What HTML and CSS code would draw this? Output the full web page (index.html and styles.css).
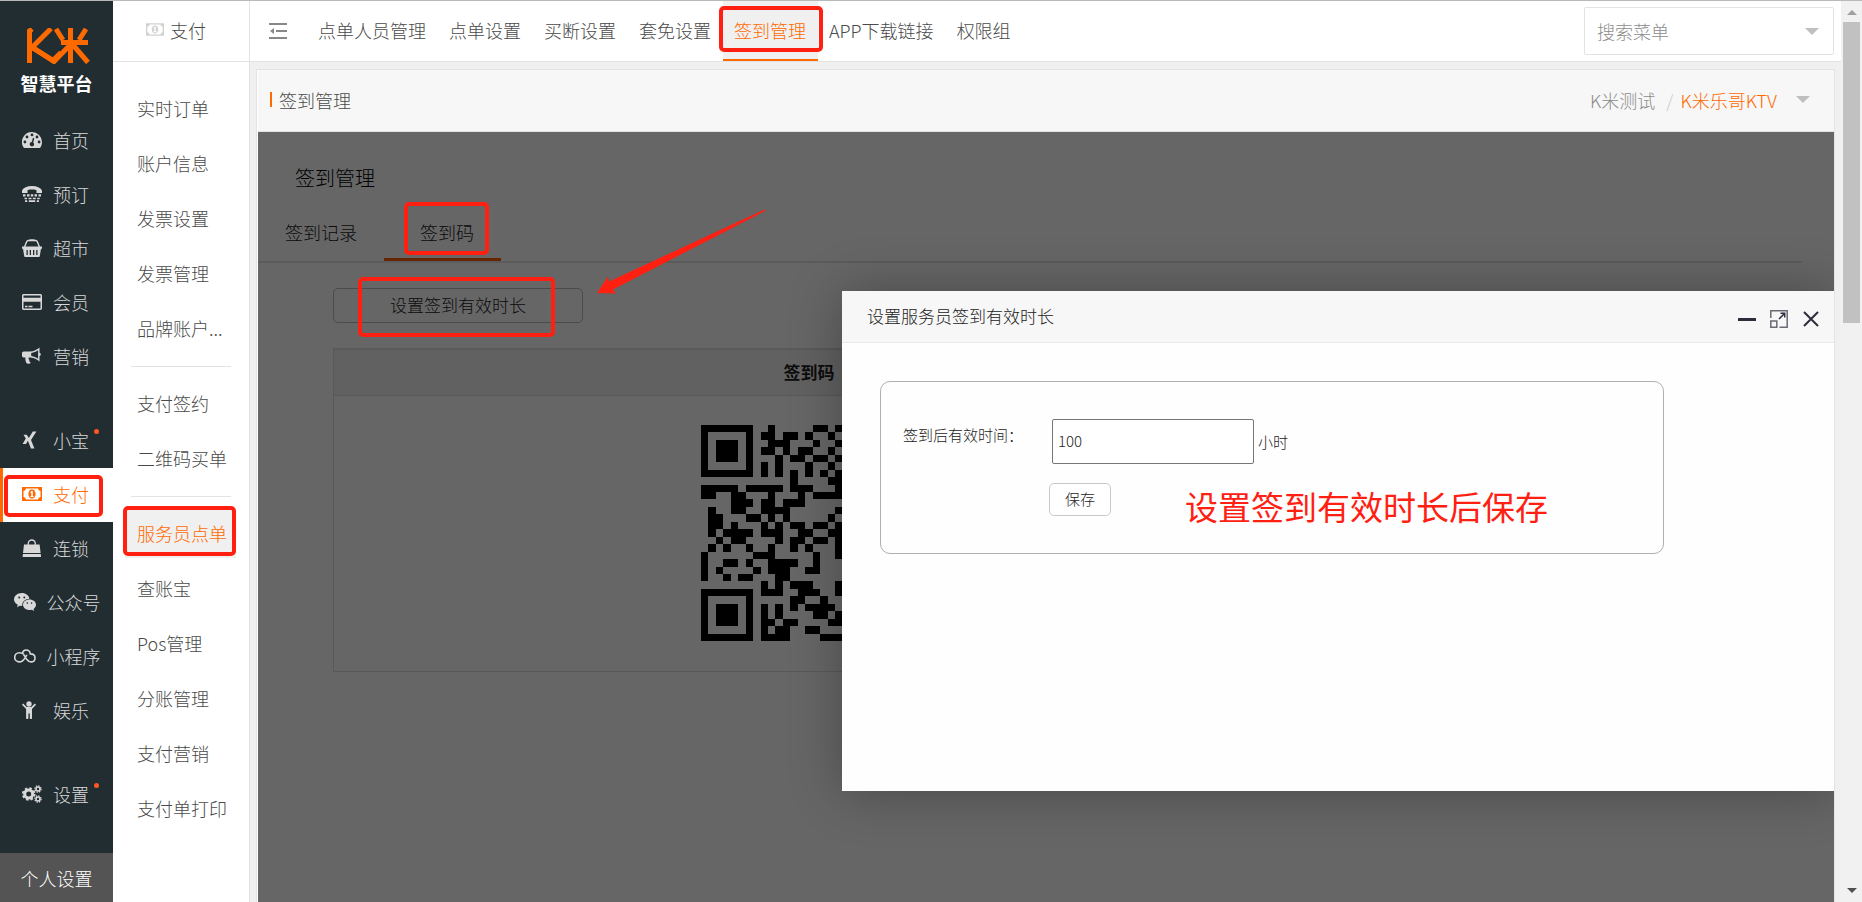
FILE: index.html
```html
<!DOCTYPE html>
<html lang="zh-CN">
<head>
<meta charset="utf-8">
<title>签到管理</title>
<link rel="stylesheet" href="styles.css">
</head>
<body>
<svg class="sprite" aria-hidden="true">
  <symbol id="i-money" viewBox="0 0 20 14"><path fill-rule="evenodd" d="M0 0h20v14H0zM4 1.500A2.800 2.800 0 0 1 1.500 4v6A2.800 2.800 0 0 1 4 12.500h12A2.800 2.800 0 0 1 18.500 10V4A2.800 2.800 0 0 1 16 1.500zM10 2.500c2.200 0 3.600 2 3.600 4.500s-1.400 4.500-3.600 4.500S6.400 9.500 6.400 7 7.800 2.500 10 2.500zM9.600 4 8.200 5.200l.5.8.6-.3V9H8.400v1h3.300V9h-.9V4z"/></symbol>
  <symbol id="i-dash" viewBox="0 0 20 16"><path fill-rule="evenodd" d="M10 0a10 10 0 0 1 10 10c0 2-.6 3.900-1.600 5.500-.2.300-.4.500-.8.500H2.400c-.4 0-.6-.2-.8-.5A10 10 0 0 1 10 0zM2.900 8.600a1.400 1.400 0 1 0 0 2.800 1.400 1.400 0 0 0 0-2.800zM5 3.600a1.400 1.400 0 1 0 0 2.800 1.400 1.400 0 0 0 0-2.800zM10 1.500a1.400 1.400 0 1 0 0 2.800 1.400 1.400 0 0 0 0-2.800zM15 3.600a1.400 1.400 0 1 0 0 2.800 1.400 1.400 0 0 0 0-2.800zM17.100 8.600a1.400 1.400 0 1 0 0 2.800 1.400 1.400 0 0 0 0-2.800zM11 5.800 9.700 10a2.200 2.200 0 1 0 1.500.4l1.100-4.200z"/></symbol>
  <symbol id="i-tty" viewBox="0 0 20 16"><path d="M0 7V4.500C1.500 1.500 5 0 10 0s8.500 1.500 10 4.500V7h-5.500V4.200C13 3.600 11.500 3.500 10 3.500s-3 .1-4.500.7V7zM1 8.300h2.500v2.300H1zM5 8.300h2.500v2.300H5zM8.800 8.300h2.400v2.300H8.800zM12.500 8.300H15v2.300h-2.500zM16.500 8.300H19v2.300h-2.500zM2.500 11.800H5v1.500H2.500zM6.500 11.800h3v1.500h-3zM10.800 11.800h3v1.500h-3zM15.200 11.800h2.500v1.500h-2.500zM3 14.200h2.200V16H3zM6.800 14.200h6.400V16H6.800zM14.800 14.200H17V16h-2.200z"/></symbol>
  <symbol id="i-basket" viewBox="0 0 20 18"><path d="M2.500 8 4.800 2.500 6 1.500h2M12 1.500h2l1.200 1L17.500 8" fill="none" stroke="currentColor" stroke-width="1.400"/><path fill-rule="evenodd" d="M7.500.3h5v2h-5zM0 7.500h20v2.300h-1L17.800 17a1 1 0 0 1-1 1H3.200a1 1 0 0 1-1-1L1 9.800H0zM4.500 11v5h1.300v-5zM7.700 11v5H9v-5zM11 11v5h1.300v-5zM14.200 11v5h1.300v-5z"/></symbol>
  <symbol id="i-card" viewBox="0 0 20 16"><path fill-rule="evenodd" d="M1.700 0h16.600C19.300 0 20 .7 20 1.700v12.600c0 1-.7 1.700-1.700 1.700H1.700C.7 16 0 15.300 0 14.300V1.700C0 .7.700 0 1.700 0zM1.500 1.400v2.300h17V1.400zM1.500 7.800v6.700h17V7.800zM3 11.800h2.500v1.400H3zM6.500 11.800h4v1.400h-4z"/></symbol>
  <symbol id="i-horn" viewBox="0 0 20 17"><path fill-rule="evenodd" d="M17.500 0v5.300a1.700 1.700 0 0 1 0 3.300V14C15 11.800 12.300 10.500 8.500 10l-1.700.1c-.7 1.200.1 2 .6 2.600-.5 1 .2 1.600 1.300 2.500-.6 1.300-3.200 1.400-4.300.4-.6-2-1.500-3.500-.9-5.600H1.700C.7 10 0 9.300 0 8.300V5.800C0 4.800.7 4 1.700 4H8c3.600 0 7-1.800 9.500-4zM9.200 5.400v3.200c2.700.4 4.800 1.300 6.900 2.700V2.800C14 4.200 11.800 5.200 9.200 5.400z"/></symbol>
  <symbol id="i-xing" viewBox="0 0 20 17"><path d="M1.500 3.200h3.200L7.200 7 4 12.500H.6L3.800 7zM10.800 0h3.600L9 8.500l3.400 8.500H9L5.600 8.500z"/></symbol>
  <symbol id="i-bag" viewBox="0 0 20 18"><path d="M6.300 8V4.500a3.500 3.500 0 0 1 7 0V8" fill="none" stroke="currentColor" stroke-width="1.300"/><path d="M2 5.500h15.600l1 8.500H1zM1 15h17.800l.2 3H.6z"/></symbol>
  <symbol id="i-wechat" viewBox="0 0 22 18"><path fill-rule="evenodd" d="M7.800 0c4 0 7.200 2.500 7.600 5.700-4 .1-7.200 2.900-7.200 6.400v.9l-2.500-.3-2.700 1.600.8-2.500C1.500 10.500 0 8.700 0 6.500 0 2.900 3.500 0 7.800 0zM5.200 3.400a1 1 0 1 0 0 2 1 1 0 0 0 0-2zM10.300 3.400a1 1 0 1 0 0 2 1 1 0 0 0 0-2z"/><path fill-rule="evenodd" d="M15.500 6.500c3.600 0 6.500 2.400 6.500 5.300 0 1.700-1 3.200-2.400 4.100l.5 2.100-2.200-1.200c-4.600 1.100-8.900-1.400-8.900-5 0-2.900 2.900-5.300 6.500-5.300zM13.300 9.300a.8.800 0 1 0 0 1.600.8.800 0 0 0 0-1.600zM17.600 9.300a.8.800 0 1 0 0 1.600.8.800 0 0 0 0-1.600z"/></symbol>
  <symbol id="i-mini" viewBox="0 0 22 14"><path d="M9.800 5.200C8.600 4.300 7 3.700 5.300 3.700a4.600 4.600 0 0 0 0 9.200c2.600 0 4.200-1.500 5.600-3.800l2-3.300M8.300 4.200C8.800 2.200 10.300 1 12.200 1c2.300 0 3.800 1.600 4.100 3.900 2.800.1 4.700 1.600 4.700 4 0 2.300-1.700 4-4 4-2 0-3.200-1.200-4.600-3L9.600 5.500" fill="none" stroke="currentColor" stroke-width="1.600"/></symbol>
  <symbol id="i-child" viewBox="0 0 20 18"><circle cx="7" cy="3" r="2.700"/><path d="M1.200 2.600 4.600 6h4.800l3.400-3.400 1.200 1.200-4 4.200v9a1 1 0 0 1-2.200 0v-4.500H6.400V17a1 1 0 0 1-2.300 0V8L0 3.800z"/></symbol>
  <symbol id="i-cogs" viewBox="0 0 20 18"><g fill="none" stroke="currentColor"><circle cx="6.700" cy="9" r="4" stroke-width="3"/><circle cx="6.700" cy="9" r="5.900" stroke-width="1.800" stroke-dasharray="2.500 2.130"/><circle cx="16" cy="4" r="2" stroke-width="1.600"/><circle cx="16" cy="4" r="3.200" stroke-width="1.200" stroke-dasharray="1.400 1.100"/><circle cx="16" cy="14" r="2" stroke-width="1.600"/><circle cx="16" cy="14" r="3.200" stroke-width="1.200" stroke-dasharray="1.400 1.100"/></g></symbol>
</svg>

<div class="app">
  <nav class="rail">
    <div class="brand">
      <svg class="brand-mark" viewBox="0 0 64 36" fill="none" stroke="#ff6a00" stroke-width="5" role="img" aria-label="K米"><path d="M2.500 35V3L5 .8M24 .5 5 19.500 26 32.500 34 24.500M2.500 14v8"/><path d="M5 19 27 33.500 45 15M29 1l7 11M43.500 0v35M59 1l-7 11M34 14.500h27M46 17l15 17.500"/></svg>
      <span class="brand-name">智慧平台</span>
    </div>
    <a class="rail-item" href="#"><svg class="icon"><use href="#i-dash"/></svg>首页</a>
    <a class="rail-item" href="#"><svg class="icon"><use href="#i-tty"/></svg>预订</a>
    <a class="rail-item" href="#"><svg class="icon"><use href="#i-basket"/></svg>超市</a>
    <a class="rail-item" href="#"><svg class="icon"><use href="#i-card"/></svg>会员</a>
    <a class="rail-item" href="#"><svg class="icon"><use href="#i-horn"/></svg>营销</a>
    <a class="rail-item group-start" href="#"><svg class="icon"><use href="#i-xing"/></svg>小宝<i class="dot"></i></a>
    <a class="rail-item active" href="#"><svg class="icon"><use href="#i-money"/></svg>支付<i class="mark mark-rail"></i></a>
    <a class="rail-item" href="#"><svg class="icon"><use href="#i-bag"/></svg>连锁</a>
    <a class="rail-item" href="#"><svg class="icon wide"><use href="#i-wechat"/></svg>公众号</a>
    <a class="rail-item" href="#"><svg class="icon wide"><use href="#i-mini"/></svg>小程序</a>
    <a class="rail-item" href="#"><svg class="icon"><use href="#i-child"/></svg>娱乐</a>
    <a class="rail-item group-start" href="#"><svg class="icon"><use href="#i-cogs"/></svg>设置<i class="dot"></i></a>
    <a class="rail-foot" href="#">个人设置</a>
  </nav>

  <aside class="sub">
    <h2 class="sub-title"><svg class="icon small"><use href="#i-money"/></svg>支付</h2>
    <nav class="sub-nav">
      <a href="#">实时订单</a>
      <a href="#">账户信息</a>
      <a href="#">发票设置</a>
      <a href="#">发票管理</a>
      <a href="#">品牌账户...</a>
      <hr>
      <a href="#">支付签约</a>
      <a href="#">二维码买单</a>
      <hr>
      <a class="active" href="#">服务员点单<i class="mark mark-sub"></i></a>
      <a href="#">查账宝</a>
      <a href="#">Pos管理</a>
      <a href="#">分账管理</a>
      <a href="#">支付营销</a>
      <a href="#">支付单打印</a>
    </nav>
  </aside>

  <main class="main">
    <header class="topbar">
      <button class="fold" type="button" aria-label="收起菜单"><svg viewBox="0 0 18 16"><path d="M0 0h18v2H0zM7 7h11v2H7zM0 14h18v2H0zM1 8l4-3v6z"/></svg></button>
      <nav class="tabs">
        <a href="#">点单人员管理</a>
        <a href="#">点单设置</a>
        <a href="#">买断设置</a>
        <a href="#">套免设置</a>
        <a class="active" href="#">签到管理<i class="mark mark-tab"></i></a>
        <a href="#">APP下载链接</a>
        <a href="#">权限组</a>
      </nav>
      <label class="search"><input type="text" placeholder="搜索菜单" aria-label="搜索菜单"><i class="caret"></i></label>
    </header>

    <section class="panel">
      <div class="panel-head">
        <h1>签到管理</h1>
        <div class="crumbs"><a href="#">K米测试</a><span class="slash">/</span><a class="current" href="#">K米乐哥KTV</a><i class="caret"></i></div>
      </div>
      <div class="stage">
        <h2 class="stage-title">签到管理</h2>
        <nav class="stage-tabs">
          <a href="#">签到记录</a>
          <a class="active" href="#">签到码<i class="mark mark-code"></i></a>
        </nav>
        <div class="stage-body">
          <button class="set-btn" type="button">设置签到有效时长<i class="mark mark-set"></i></button>
          <table class="code-table">
            <thead><tr><th>签到码</th></tr></thead>
            <tbody><tr><td>
              <svg class="qr" viewBox="0 0 29 29" role="img" aria-label="签到二维码"><path d="M0 .5h7M9 .5h1M15 .5h2M18 .5h1M0 1.500h1M6 1.500h1M8 1.500h2M11 1.500h2M14 1.500h1M17 1.500h1M0 2.500h1M2 2.500h3M6 2.500h1M9 2.500h3M15 2.500h1M18 2.500h1M0 3.500h1M2 3.500h3M6 3.500h1M8 3.500h2M11 3.500h1M13 3.500h2M17 3.500h1M0 4.500h1M2 4.500h3M6 4.500h1M10 4.500h1M12 4.500h2M15 4.500h2M18 4.500h1M0 5.500h1M6 5.500h1M8 5.500h1M10 5.500h1M14 5.500h1M17 5.500h1M0 6.500h7M8 6.500h1M10 6.500h1M12 6.500h1M14 6.500h1M16 6.500h1M18 6.500h1M12 7.500h1M17 7.500h2M0 8.500h5M6 8.500h5M12 8.500h3M18 8.500h1M0 9.500h2M4 9.500h2M9 9.500h1M13 9.500h1M15 9.500h4M4 10.500h3M8 10.500h2M11 10.500h3M1 11.500h1M4 11.500h2M8 11.500h4M18 11.500h1M1 12.500h2M6 12.500h2M9 12.500h1M11 12.500h1M17 12.500h1M1 13.500h2M4 13.500h1M8 13.500h1M10 13.500h1M12 13.500h2M15 13.500h2M18 13.500h1M1 14.500h1M3 14.500h4M8 14.500h3M13 14.500h2M17 14.500h2M2 15.500h1M4 15.500h2M10 15.500h1M12 15.500h2M15 15.500h2M18 15.500h1M1 16.500h1M3 16.500h1M6 16.500h1M9 16.500h1M12 16.500h1M14 16.500h1M18 16.500h1M0 17.500h1M7 17.500h3M15 17.500h1M18 17.500h1M0 18.500h1M3 18.500h2M6 18.500h1M9 18.500h4M15 18.500h1M0 19.500h1M2 19.500h1M7 19.500h1M9 19.500h3M14 19.500h2M0 20.500h1M3 20.500h1M5 20.500h2M10 20.500h2M8 21.500h1M10 21.500h1M12 21.500h3M18 21.500h1M0 22.500h7M8 22.500h3M13 22.500h3M18 22.500h1M0 23.500h1M6 23.500h1M12 23.500h2M16 23.500h1M0 24.500h1M2 24.500h3M6 24.500h1M8 24.500h1M10 24.500h1M12 24.500h1M14 24.500h4M0 25.500h1M2 25.500h3M6 25.500h1M8 25.500h1M10 25.500h1M15 25.500h2M18 25.500h1M0 26.500h1M2 26.500h3M6 26.500h1M8 26.500h2M11 26.500h2M17 26.500h2M0 27.500h1M6 27.500h1M8 27.500h1M10 27.500h2M14 27.500h2M0 28.500h7M8 28.500h4M16 28.500h3"/></svg>
            </td></tr></tbody>
          </table>
        </div>
        <div class="shade"></div>
        <svg class="arrow" viewBox="0 0 170 86" aria-hidden="true"><path d="M0 84 11 67.500l1 5L167.500.5l1 1.300L16 80.500l3 4z"/></svg>

        <div class="dialog" role="dialog" aria-labelledby="dlg-title">
          <div class="dialog-head">
            <h3 id="dlg-title">设置服务员签到有效时长</h3>
            <div class="dialog-tools">
              <button type="button" aria-label="最小化"><svg viewBox="0 0 18 18"><path d="M0 8h18v3H0z" fill="#2e2d3c"/></svg></button>
              <button type="button" aria-label="最大化"><svg viewBox="0 0 18 18" fill="none" stroke="#6b6a75" stroke-width="1.500"><path d="M.8 8V.8h16.400v16.400H9.500M.8 11h6v6.200h-6z"/><path d="M9 9l5.500-5.500M10.500 3.300h4.200v4.200" stroke="#2e2d3c"/></svg></button>
              <button type="button" aria-label="关闭"><svg viewBox="0 0 18 18" fill="none" stroke="#2e2d3c" stroke-width="2"><path d="M2 2l14 14M16 2 2 16"/></svg></button>
            </div>
          </div>
          <form class="dialog-form">
            <label class="field-label" for="hours">签到后有效时间：</label>
            <div class="field"><input id="hours" type="text" value="100"><span>小时</span></div>
            <div class="actions"><button class="save" type="button">保存</button><p class="note">设置签到有效时长后保存</p></div>
          </form>
        </div>
      </div>
    </section>
  </main>

  <div class="scroll" aria-hidden="true"><i class="up"></i><i class="thumb"></i><i class="down"></i></div>
</div>
</body>
</html>
```

FILE: styles.css
```css
* { box-sizing: border-box; }
body {
  margin: 0;
  font: 300 18px/24px "Noto Sans CJK SC", "Noto Sans", sans-serif;
  color: #4a4a4a;
  background: #f0f0f0;
}
a { color: inherit; text-decoration: none; }
button, input { font: inherit; color: inherit; }
h1, h2, h3, p { margin: 0; font-size: inherit; font-weight: inherit; }
.sprite { display: none; }
.app {
  display: flex;
  height: 100vh;
  border-top: 1px solid #b9b9b9;
  overflow: hidden;
}
.icon { width: 20px; height: 18px; fill: currentColor; }
.icon.wide { width: 22px; margin-left: 3px; }
.icon.small { width: 18px; height: 13px; color: #d2d2d2; }
.caret {
  border: 7px solid transparent;
  border-top-color: #bfbfbf;
  border-bottom: 0;
}
.mark {
  position: absolute;
  z-index: 3;
  border: 4px solid #ff2012;
  border-radius: 5px;
  pointer-events: none;
}

/* dark navigation rail */
.rail {
  display: flex;
  flex-direction: column;
  flex: none;
  width: 113px;
  background: #222d32;
  color: #d8d8d8;
}
.brand {
  display: flex;
  flex-direction: column;
  align-items: center;
  height: 113px;
  padding-top: 27px;
}
.brand-mark { width: 64px; height: 36px; margin-left: 4px; }
.brand-name {
  margin-top: 7px;
  color: #fff;
  font-size: 18px;
  font-weight: 700;
}
.rail-item {
  position: relative;
  display: flex;
  align-items: center;
  justify-content: center;
  gap: 11px;
  height: 54px;
  padding: 0 2px 2px 0;
}
.rail-item.group-start { margin-top: 30px; }
.rail-item.active {
  background: #fff;
  color: #ff6a00;
  border-left: 3px solid #ff6a00;
  padding-right: 5px;
}
.dot {
  position: absolute;
  top: 15px;
  right: 14px;
  width: 5px;
  height: 5px;
  border-radius: 50%;
  background: #ff5722;
}
.mark-rail { inset: 7px 10px 5px 1px; }
.rail-foot {
  display: flex;
  align-items: center;
  justify-content: center;
  height: 49px;
  margin-top: auto;
  background: #545454;
  color: #fff;
}

/* second level menu */
.sub {
  flex: none;
  width: 137px;
  background: #fff;
  border-right: 1px solid #e3e3e3;
}
.sub-title {
  display: flex;
  align-items: center;
  justify-content: center;
  gap: 6px;
  height: 61px;
  padding: 0 10px 3px 0;
  border-bottom: 1px solid #e3e3e3;
}
.sub-nav {
  display: flex;
  flex-direction: column;
  padding: 19px 13px 0 12px;
}
.sub-nav a {
  position: relative;
  height: 49px;
  margin: 3px 0;
  padding: 12px 0 0 12px;
  white-space: nowrap;
}
.sub-nav hr {
  width: 100px;
  height: 1px;
  margin: 10px 0 9px 6px;
  border: 0;
  background: #e3e3e3;
}
.sub-nav a.active { background: #f0f0f0; color: #ff6a00; }
.mark-sub { inset: -3px 0 2px -2px; }

/* top bar */
.main { display: flex; flex-direction: column; flex: 1; min-width: 0; }
.topbar {
  display: flex;
  flex: none;
  align-items: center;
  height: 61px;
  padding-right: 7px;
  background: #fff;
  border-bottom: 1px solid #e3e3e3;
}
.fold {
  flex: none;
  width: 18px;
  height: 16px;
  margin: 0 20px 0 19px;
  padding: 0;
  border: 0;
  background: none;
}
.fold svg { display: block; width: 18px; height: 16px; fill: #888; }
.tabs { display: flex; align-self: stretch; flex: 1; }
.tabs a {
  position: relative;
  padding: 17px 12px 0 11px;
  white-space: nowrap;
}
.tabs a.active {
  background: #f0f0f0;
  color: #ff6a00;
  border-bottom: 2px solid #ff6a00;
}
.mark-tab { inset: 5px -5px 7px -4px; }
.search {
  display: flex;
  align-items: center;
  width: 250px;
  height: 48px;
  padding: 0 14px 0 12px;
  border: 1px solid #e3e3e3;
  border-radius: 2px;
}
.search input {
  flex: 1;
  min-width: 0;
  padding: 0;
  border: 0;
  background: none;
}
.search input::placeholder { color: #8c8c8c; opacity: 1; }

/* content panel */
.panel {
  display: flex;
  flex-direction: column;
  flex: 1;
  margin: 7px 6px 0 6px;
  border: 1px solid #e3e3e3;
  border-bottom: 0;
  padding-left: 1px;
  background: #fff;
}
.panel-head {
  display: flex;
  align-items: center;
  justify-content: space-between;
  height: 62px;
  padding: 0 24px 2px 12px;
  background: #f7f7f7;
  border-bottom: 1px solid #e3e3e3;
}
.panel-head h1 { display: flex; align-items: center; gap: 7px; }
.panel-head h1::before {
  content: "";
  width: 2px;
  height: 15px;
  background: #ff6a00;
}
.crumbs { display: flex; align-items: center; color: #8c8c8c; }
.slash { margin: 0 7px 0 11px; color: #ccc; }
.current { color: #ff6a00; }
.crumbs .caret { margin-left: 19px; }

.stage {
  position: relative;
  flex: 1;
  overflow: hidden;
  background: #fff;
}
.stage-title {
  padding: 34px 0 0 37px;
  color: #000;
  font-size: 20px;
}
.stage-tabs {
  display: flex;
  margin: 22px 32px 0 0;
  border-bottom: 2px solid #e3e3e3;
  color: #222;
}
.stage-tabs a {
  position: relative;
  flex: none;
  height: 49px;
  padding: 8px 27px 0;
}
.stage-tabs a.active {
  padding-left: 36px;
  border-bottom: 3px solid #ff5a00;
}
.mark-code { inset: -10px 12px 3px 20px; }
.stage-body {
  display: flex;
  flex-direction: column;
  align-items: flex-start;
  padding: 25px 32px 0 75px;
}
.set-btn {
  position: relative;
  width: 250px;
  height: 35px;
  padding: 0 0 2px;
  border: 1px solid #bbb;
  border-radius: 5px;
  background: #fff;
  color: #222;
  font-size: 17px;
}
.mark-set { inset: -12px 27px -15px 24px; }
.code-table {
  width: 920px;
  margin-top: 25px;
  border: 1px solid #dedede;
  border-top-width: 2px;
  border-collapse: separate;
  border-spacing: 0;
}
.code-table th {
  height: 46px;
  padding: 0 0 2px 32px;
  border-bottom: 1px solid #dedede;
  background: #f2f2f5;
  color: #222;
  font-size: 17px;
  font-weight: 700;
}
.code-table td { padding: 29px 0 30px 32px; text-align: center; }
.qr {
  display: block;
  width: 216px;
  height: 216px;
  margin: 0 auto;
  stroke: #000;
  stroke-width: 1;
  shape-rendering: crispEdges;
}
.shade {
  position: absolute;
  inset: 0;
  z-index: 2;
  background: rgba(0, 0, 0, 0.6);
}
.arrow {
  position: absolute;
  z-index: 3;
  left: 339px;
  top: 77px;
  width: 170px;
  height: 86px;
  fill: #ff2012;
}

/* dialog */
.dialog {
  position: absolute;
  z-index: 4;
  top: 159px;
  left: 584px;
  right: 0;
  min-height: 500px;
  background: #fefefe;
  box-shadow: 1px 1px 50px rgba(0, 0, 0, 0.3);
  color: #222;
}
.dialog-head {
  display: flex;
  align-items: center;
  justify-content: space-between;
  height: 52px;
  padding: 0 14px 2px 25px;
  background: #f7f7f7;
  border-bottom: 1px solid #e9e9e9;
}
.dialog-head h3 { font-size: 17px; }
.dialog-tools { display: flex; gap: 14px; padding-top: 6px; }
.dialog-tools button {
  width: 18px;
  height: 18px;
  padding: 0;
  border: 0;
  background: none;
}
.dialog-tools svg { display: block; width: 18px; height: 18px; }
.dialog-form {
  display: grid;
  grid-template-columns: 146px 1fr;
  row-gap: 19px;
  margin: 38px 170px 0 38px;
  padding: 37px 22px 24px;
  border: 1px solid #b0b0b0;
  border-radius: 10px;
  font-size: 15px;
}
.field-label { padding-top: 4px; white-space: nowrap; }
.field { display: flex; align-items: center; gap: 4px; padding-left: 3px; }
.field input {
  width: 202px;
  height: 45px;
  padding: 0 5px 2px;
  border: 1px solid #767676;
  border-radius: 2px;
  background: #fff;
}
.actions { grid-column: 2; display: flex; align-items: flex-start; gap: 74px; }
.save {
  width: 62px;
  height: 33px;
  padding: 0 0 2px;
  border: 1px solid #c9c9c9;
  border-radius: 5px;
  background: #fff;
}
.note {
  color: #ff2012;
  font-size: 33px;
  font-weight: 400;
  line-height: 46px;
  white-space: nowrap;
}

/* scrollbar column */
.scroll {
  display: flex;
  flex: none;
  flex-direction: column;
  align-items: center;
  width: 21px;
  padding: 9px 0;
  background: #f1f1f1;
}
.up { border: 5px solid transparent; border-bottom-color: #a0a0a0; border-top: 0; }
.thumb { width: 17px; height: 301px; margin-top: 7px; background: #c1c1c1; }
.down { margin-top: auto; border: 5px solid transparent; border-top-color: #505050; border-bottom: 0; }
```
